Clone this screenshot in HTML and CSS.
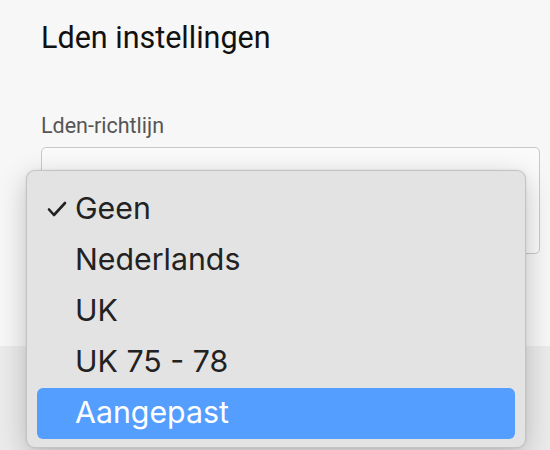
FILE: index.html
```html
<!DOCTYPE html>
<html lang="nl">
<head>
<meta charset="utf-8">
<title>Lden instellingen</title>
<link rel="stylesheet" href="styles.css">
</head>
<body>
<div class="dialog">
  <div class="dialog-body">
    <h1 class="title">Lden instellingen</h1>
    <label class="field-label">Lden-richtlijn</label>
    <div class="select-box"></div>
  </div>
  <div class="dialog-footer"></div>
</div>
<ul class="menu">
  <li class="menu-item checked">
    <svg class="check" viewBox="0 0 20 16" width="20" height="16"><path d="M2 8.5 L7 14 L18 2" fill="none" stroke="#222" stroke-width="2.6" stroke-linecap="round" stroke-linejoin="round"/></svg>
    <span>Geen</span>
  </li>
  <li class="menu-item"><span>Nederlands</span></li>
  <li class="menu-item"><span>UK</span></li>
  <li class="menu-item"><span>UK 75 - 78</span></li>
  <li class="menu-item active"><span>Aangepast</span></li>
</ul>
</body>
</html>
```

FILE: styles.css
```css
html, body {
  margin: 0;
  padding: 0;
  height: 100%;
}
body {
  background: #f7f7f7;
  font-family: Roboto, "Noto Sans", sans-serif;
  overflow: hidden;
}
.dialog {
  display: flex;
  flex-direction: column;
  height: 450px;
}
.dialog-body {
  height: 346px;
  box-sizing: border-box;
  padding: 20px 10px 0 41px;
  display: flex;
  flex-direction: column;
}
.title {
  margin: 0;
  font-size: 30.5px;
  line-height: 36px;
  font-weight: 400;
  color: #111;
}
.field-label {
  margin-top: 57px;
  font-size: 21.5px;
  line-height: 26px;
  color: #555;
}
.select-box {
  margin-top: 8px;
  height: 105px;
  border: 1px solid #c9c9c9;
  border-radius: 5px;
  background: #fafafa;
}
.dialog-footer {
  flex: 1;
  background: #ebebeb;
}
.menu {
  position: absolute;
  left: 26px;
  top: 170px;
  width: 500px;
  height: 278px;
  box-sizing: border-box;
  margin: 0;
  padding: 13px 10px 9px;
  list-style: none;
  background: #e3e3e3;
  border: 1px solid rgba(0,0,0,0.14);
  border-radius: 9px;
  box-shadow: 0 8px 28px rgba(0,0,0,0.22), 0 0 3px rgba(0,0,0,0.08);
  font-family: Inter, Roboto, sans-serif;
}
.menu-item {
  position: relative;
  height: 51px;
  display: flex;
  align-items: center;
  padding-left: 38px;
  font-size: 30.3px;
  color: #222;
  border-radius: 6px;
}
.menu-item span {
  margin-top: -3px;
}
.menu-item.active {
  background: #549eff;
  color: #fff;
}
.check {
  position: absolute;
  left: 10px;
  top: 17px;
}
```
